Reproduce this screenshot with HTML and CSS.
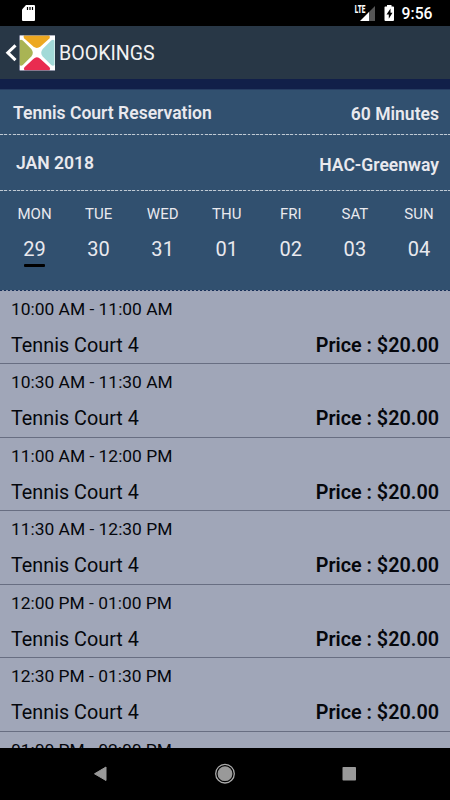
FILE: index.html
```html
<!DOCTYPE html>
<html lang="en">
<head>
<meta charset="utf-8">
<title>Bookings</title>
<link rel="stylesheet" href="styles.css">
</head>
<body>
<div class="screen">
  <div class="status">
    <svg width="450" height="26" viewBox="0 0 450 26">
      <path d="M26 5h8q1 0 1 1v14q0 1-1 1H23q-1 0-1-1V9.500z" fill="#fff"/>
      <path d="M27.500 7v3M30 7v3M32.500 7v3" stroke="#000" stroke-width="1.200"/>
      <path d="M375 6v15h-7v-8z" fill="#555"/>
      <path d="M369 12v9h-9z" fill="#fff"/>
      <text class="lte" x="354.800" y="12.500" textLength="10.500" lengthAdjust="spacingAndGlyphs">LTE</text>
      <path d="M387 5h4.500v1.500h1.700q.8 0 .8.8V20q0 1-1 1h-7.500q-1 0-1-1V7.300q0-.8.8-.8h1.700z" fill="#fff"/>
      <path d="M390.500 8.500l-4 6h2.300v4.300l3.700-6h-2z" fill="#000"/>
    </svg>
    <span class="clock">9:56</span>
  </div>
  <header class="header">
    <svg class="back" width="13" height="20" viewBox="0 0 13 20"><path d="M11.500 2.300L3.800 9.700l7.700 7.400" fill="none" stroke="#fff" stroke-width="3"/></svg>
    <svg class="logo" width="36" height="36" viewBox="0 0 36 36">
      <rect width="36" height="36" fill="#fff"/>
      <path d="M5 .5h25q1.800 1.300.4 2.900L21.500 11.600q-3.700 2.700-7.200 0L5.300 3.400Q3.800 1.800 5 .5z" fill="#eda820"/>
      <path d="M.5 5.500Q2 4 3.800 5.500L12.300 14q3 3.800 0 7.500L3.800 30Q2 31.500.5 30z" fill="#a9b454"/>
      <path d="M35.500 5.500Q34 4 32.200 5.500L23.700 14q-3 3.800 0 7.500l8.500 8.500q1.800 1.500 3.300 0z" fill="#a3dad8"/>
      <path d="M5.500 35.300h25q1.300-1.600 0-3.100L21.500 24q-3.600-3.400-7.200 0l-8.800 8.200q-1.300 1.500 0 3.100z" fill="#e92c50"/>
      <path d="M0 0h36M.3 0v36M0 35.800h36" stroke="#182348" stroke-width=".7"/>
    </svg>
    <h1 class="title">BOOKINGS</h1>
  </header>
  <div class="strip"></div>
  <section class="panel">
    <div class="info service"><span>Tennis Court Reservation</span><span class="right">60 Minutes</span></div>
    <div class="rule"></div>
    <div class="info place"><span>JAN 2018</span><span class="right">HAC-Greenway</span></div>
    <div class="rule"></div>
    <div class="week">
      <div class="day selected"><span class="name">MON</span><span class="num">29</span></div>
      <div class="day"><span class="name">TUE</span><span class="num">30</span></div>
      <div class="day"><span class="name">WED</span><span class="num">31</span></div>
      <div class="day"><span class="name">THU</span><span class="num">01</span></div>
      <div class="day"><span class="name">FRI</span><span class="num">02</span></div>
      <div class="day"><span class="name">SAT</span><span class="num">03</span></div>
      <div class="day"><span class="name">SUN</span><span class="num">04</span></div>
    </div>
  </section>
  <main class="slots">
    <div class="rule dark"></div>
    <div class="slot first"><div class="time">10:00 AM - 11:00 AM</div><div class="court"><span>Tennis Court 4</span><b>Price : $20.00</b></div></div>
    <div class="slot"><div class="time">10:30 AM - 11:30 AM</div><div class="court"><span>Tennis Court 4</span><b>Price : $20.00</b></div></div>
    <div class="slot"><div class="time">11:00 AM - 12:00 PM</div><div class="court"><span>Tennis Court 4</span><b>Price : $20.00</b></div></div>
    <div class="slot"><div class="time">11:30 AM - 12:30 PM</div><div class="court"><span>Tennis Court 4</span><b>Price : $20.00</b></div></div>
    <div class="slot"><div class="time">12:00 PM - 01:00 PM</div><div class="court"><span>Tennis Court 4</span><b>Price : $20.00</b></div></div>
    <div class="slot"><div class="time">12:30 PM - 01:30 PM</div><div class="court"><span>Tennis Court 4</span><b>Price : $20.00</b></div></div>
    <div class="slot"><div class="time">01:00 PM - 02:00 PM</div></div>
  </main>
  <nav class="nav">
    <svg width="450" height="52" viewBox="0 0 450 52">
      <path d="M106 19v13.500L94.500 25.800z" fill="#999" stroke="#999" stroke-linejoin="round"/>
      <circle cx="225" cy="25.700" r="9.300" fill="none" stroke="#aaa" stroke-width="1.300"/>
      <circle cx="225" cy="25.700" r="7.400" fill="#999"/>
      <rect x="342.500" y="19" width="13.500" height="13.500" rx=".8" fill="#999"/>
    </svg>
  </nav>
</div>
</body>
</html>
```

FILE: styles.css
```css
* { box-sizing: border-box; }
body { margin: 0; background: #000; font-family: Roboto, sans-serif; }
.screen { width: 450px; height: 800px; display: flex; flex-direction: column; overflow: hidden; }
.screen > * { flex: none; }
svg { display: block; flex: none; }
.status { height: 26px; position: relative; background: #000; }
.lte { font-size: 10px; font-weight: 900; fill: #fff; }
.clock { position: absolute; right: 17.500px; top: 1px; line-height: 26px; font-size: 15.7px; font-weight: 500; color: #fff; }
.header { height: 53px; background: #283746; display: flex; align-items: center; padding-left: 4px; }
.back { margin-right: 2px; }
.title { margin: 2px 0 0 4px; font-size: 19.6px; line-height: 53px; font-weight: 400; color: #f2f2f2; }
.strip { height: 11px; background: #111f49; border-bottom: 1px solid #263d62; }
.panel { height: 200px; background: #31506f; color: #e9e9ee; }
.info { display: flex; justify-content: space-between; padding: 0 11px 0 13px; font-size: 17.55px; font-weight: 600; }
.service { height: 44px; line-height: 47px; }
.service .right { padding-top: 1px; }
.place { height: 55px; line-height: 56px; padding-left: 16px; }
.place .right { padding-top: 2px; }
.rule { height: 1px; background: repeating-linear-gradient(90deg, #bfcad4 0 2.8px, #48637f 2.8px 4.27px); }
.rule.dark { background: repeating-linear-gradient(90deg, #182f58 0 2px, #8b96ab 2px 4px); }
.week { height: 99px; display: grid; grid-template-columns: repeat(7, 64.08px); padding: 13px 0 0 2.500px; }
.day { display: flex; flex-direction: column; align-items: center; }
.name { font-size: 15px; line-height: 20px; }
.num { font-size: 20px; line-height: 30px; margin-top: 10px; letter-spacing: .1px; }
.selected::after { content: ""; width: 21px; height: 3px; border-radius: 1px; background: #000; }
.slots { height: 458px; overflow: hidden; background: #a0a6b8; color: #05070c; }
.slot { height: 73.5px; border-bottom: 1px solid #686e82; padding: 0 11px; }
.slot.first { margin-top: -.5px; }
.time { font-size: 17.4px; line-height: 37px; }
.court { display: flex; justify-content: space-between; font-size: 19.8px; line-height: 36px; }
.court b { font-weight: 600; }
.nav { height: 52px; background: #000; }
```
